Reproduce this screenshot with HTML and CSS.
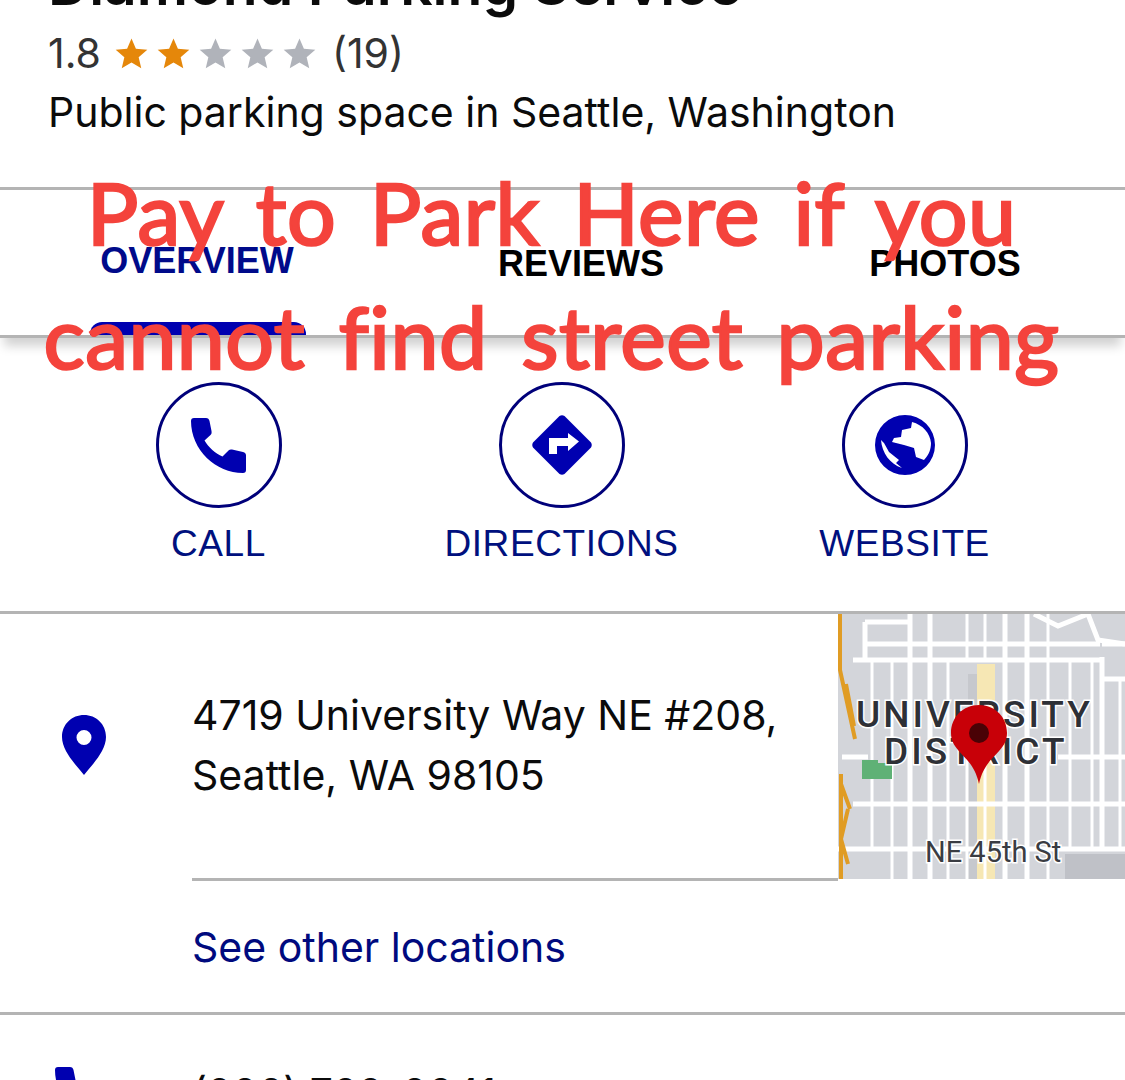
FILE: index.html
```html
<!DOCTYPE html>
<html lang="en">
<head>
  <meta charset="UTF-8" />
  <meta name="viewport" content="width=device-width, initial-scale=1.0"/>
  <title>Diamond Parking Service</title>
  <link rel="stylesheet" href="styles.css">
</head>
<body>
  <div class="page">

    <header class="place">
      <h1 class="place-name">Diamond Parking Service</h1>
      <div class="rating">
        <span>1.8</span>
        <span class="stars">
          <svg class="star star-on" viewBox="0 0 24 24"><path d="M12 1l3.200 7.600 8.300.7-6.300 5.400 1.900 8.100L12 18.500l-7.100 4.300 1.900-8.100L.5 9.300l8.300-.7z"/></svg>
          <svg class="star star-on" viewBox="0 0 24 24"><path d="M12 1l3.200 7.600 8.300.7-6.300 5.400 1.900 8.100L12 18.500l-7.100 4.300 1.900-8.100L.5 9.300l8.300-.7z"/></svg>
          <svg class="star" viewBox="0 0 24 24"><path d="M12 1l3.200 7.600 8.300.7-6.300 5.400 1.900 8.100L12 18.500l-7.100 4.300 1.900-8.100L.5 9.300l8.300-.7z"/></svg>
          <svg class="star" viewBox="0 0 24 24"><path d="M12 1l3.200 7.600 8.300.7-6.300 5.400 1.900 8.100L12 18.500l-7.100 4.300 1.900-8.100L.5 9.300l8.300-.7z"/></svg>
          <svg class="star" viewBox="0 0 24 24"><path d="M12 1l3.200 7.600 8.300.7-6.300 5.400 1.900 8.100L12 18.500l-7.100 4.300 1.900-8.100L.5 9.300l8.300-.7z"/></svg>
        </span>
        <span>(19)</span>
      </div>
      <p class="category">Public parking space in Seattle, Washington</p>
    </header>

    <nav class="tabs">
      <a class="tab tab-active">OVERVIEW</a>
      <a class="tab">REVIEWS</a>
      <a class="tab">PHOTOS</a>
    </nav>

    <section class="actions">
      <a class="action">
        <span class="action-circle">
          <svg class="call-icon" viewBox="0 0 55 55"><path d="M3 0h12c2 0 3 1 3.500 3l2 10c.3 2 0 3-1 4l-6 5.500c4 7 11 13 18 16l6-6c1-1 2-1.300 3.500-1l11 2.500c2 .5 3 1.500 3 3.500V52c0 2-1 3-3 3C25 55 0 32 0 3 0 1 1 0 3 0z"/></svg>
        </span>
        <span class="action-label">CALL</span>
      </a>
      <a class="action">
        <span class="action-circle">
          <svg class="action-icon" viewBox="0 0 60 60"><path fill-rule="evenodd" d="M27.500 1q2.500-1.500 5 0l26.500 26.500q1.500 2.500 0 5L32.500 59q-2.500 1.500-5 0L1 32.500q-1.500-2.500 0-5zM36 18v5H17v16h8v-8h11v5l11-9.500z"/></svg>
        </span>
        <span class="action-label">DIRECTIONS</span>
      </a>
      <a class="action">
        <span class="action-circle">
          <svg class="action-icon" viewBox="0 0 60 60"><path fill-rule="evenodd" d="M30 0a30 30 0 1 0 0 60 30 30 0 0 0 0-60zM6 25c1 13 9 24 21 28l-6-5 3-3-10-8-5-9zM37 7l-1 6-9 2-1 7-7 1-2 4 12 3 10 3 2 9 8 3c5-5 7-11 7-17C55 18 48 10 37 7z"/></svg>
        </span>
        <span class="action-label">WEBSITE</span>
      </a>
    </section>

    <section class="info-row">
      <div class="info-icon">
        <svg class="pin-icon" viewBox="0 0 44 60"><path fill-rule="evenodd" d="M22 0C10 0 0 9 0 22c0 14 14 28 22 38 8-10 22-24 22-38C44 9 34 0 22 0zm0 15a7.500 7.500 0 1 1 0 15 7.500 7.500 0 0 1 0-15z"/></svg>
      </div>
      <div class="info-body">
        <div class="address">
          <p class="address-text">4719 University Way NE #208,<br>Seattle, WA 98105</p>
          <svg class="map" viewBox="0 0 287 267">
            <rect width="287" height="267" fill="#d3d5da"/>
            <rect x="130" y="60" width="9" height="207" fill="#c6c8cd"/>
            <rect x="139" y="50" width="18" height="215" fill="#f6e7b4"/>
            <path class="map-road" d="M15 46H262M27 8H70M27 30H262M27 8V46M72 0V267M92 0V267M167 0V267M189 0V267M264 43V235M4 143H30M15 190H287M0 235H287M220 143H287M264 65H287M264 30H287"/>
            <path class="map-road-thin" d="M129 0V46M147 0V46M210 0V46M34 46V235M54 46V265M110 46V265M129 130V265M147 130V265M210 46V265M232 46V235M254 46V235M282 65V235"/>
            <path d="M196 0l24 12 30-12 10 26 27 4" fill="none" stroke="#fff" stroke-width="5"/>
            <path d="M2 0V56L17 125M8 70L16 112M3 160V265M3 170L12 195M10 195L3 225M3 225L10 250" fill="none" stroke="#e09c24" stroke-width="4"/>
            <path d="M24 146h16v3h14v16H24z" fill="#5fb176"/>
            <rect x="227" y="240" width="60" height="25" fill="#bfc1c7"/>
            <rect y="265" width="287" height="2" fill="#fff"/>
            <text class="map-label" x="18" y="113">UNIVERSITY</text>
            <text class="map-label" x="46" y="150">DISTRICT</text>
            <text class="map-street" x="87" y="248">NE 45th St</text>
            <path d="M141 91c-16 0-28 12-28 28 0 20 22 22 28 51 6-29 28-31 28-51 0-16-12-28-28-28z" fill="#c80008"/>
            <circle cx="141" cy="119" r="10" fill="#4a0206"/>
          </svg>
        </div>
        <a class="other-link">See other locations</a>
      </div>
    </section>

    <section class="phone-row">
      <div class="info-icon">
        <svg class="phone-icon" viewBox="0 0 55 55"><path d="M3 0h12c2 0 3 1 3.500 3l2 10c.3 2 0 3-1 4l-6 5.500c4 7 11 13 18 16l6-6c1-1 2-1.300 3.500-1l11 2.500c2 .5 3 1.500 3 3.500V52c0 2-1 3-3 3C25 55 0 32 0 3 0 1 1 0 3 0z"/></svg>
      </div>
      <p class="phone-text">(206) 722-0041</p>
    </section>

    <div class="caption">
      <div>Pay to Park Here if you</div>
      <div>cannot find street parking</div>
    </div>
  </div>
</body>
</html>
```

FILE: styles.css
```css
* {
  box-sizing: border-box;
}

html, body {
  margin: 0;
  padding: 0;
  background-color: white;
}

body {
  font-family: Inter, "Liberation Sans", sans-serif;
  color: #0b0b0b;
}

p {
  margin: 0;
}

.page {
  position: relative;
  width: 1125px;
  height: 1080px;
  overflow: hidden;
}

/* header */
.place {
  display: flow-root;
  height: 187px;
  padding-left: 48px;
}

.place-name {
  margin: -40px 0 0;
  height: 50px;
  font-size: 57px;
  line-height: 50px;
  font-weight: 600;
  white-space: nowrap;
}

.rating {
  display: flex;
  align-items: center;
  margin-top: 21px;
  height: 44px;
  font-size: 41px;
  color: #333;
}

.stars {
  display: flex;
  gap: 9px;
  margin: 0 16px 0 14px;
}

.star {
  width: 33px;
  height: 33px;
  fill: #b0b3ba;
}

.star-on {
  fill: #e5870a;
}

.category {
  margin-top: 14px;
  font-size: 41px;
  line-height: 46px;
  white-space: nowrap;
}

/* tabs */
.tabs {
  display: grid;
  grid-template-columns: 394px 374px 354px;
  height: 151px;
  border-top: 3px solid #b4b4b4;
  border-bottom: 3px solid #b4b4b4;
  box-shadow: 0 12px 10px -4px rgba(0,0,0,0.18);
}

.tab {
  padding-top: 54px;
  text-align: center;
  font-family: "Liberation Sans", sans-serif;
  font-size: 36px;
  line-height: 40px;
  font-weight: bold;
  color: #000;
}

.tab-active {
  position: relative;
  padding-top: 51px;
  color: #000a8a;
}

.tab-active::after {
  content: '';
  position: absolute;
  left: 90px;
  bottom: 0;
  width: 216px;
  height: 13px;
  background-color: #0000b0;
  border-radius: 12px 12px 0 0;
}

/* call / directions / website */
.actions {
  display: grid;
  grid-template-columns: repeat(3, 343px);
  height: 276px;
  padding: 44px 0 0 47px;
  border-bottom: 3px solid #b4b4b4;
}

.action {
  display: flex;
  flex-direction: column;
  align-items: center;
}

.action-circle {
  display: flex;
  align-items: center;
  justify-content: center;
  width: 126px;
  height: 126px;
  border: 3px solid #00007a;
  border-radius: 50%;
}

.action-icon {
  width: 60px;
  height: 60px;
  fill: #0000b0;
}

.call-icon {
  width: 55px;
  height: 55px;
  fill: #0000b0;
}

.action-label {
  margin-top: 15px;
  font-family: "Liberation Sans", sans-serif;
  font-size: 37px;
  line-height: 42px;
  letter-spacing: 0.6px;
  color: #00107e;
}

/* address + phone */
.info-row, .phone-row {
  display: flex;
}

.info-row {
  height: 401px;
  border-bottom: 3px solid #b4b4b4;
}

.info-icon {
  flex: 0 0 192px;
  padding-left: 62px;
}

.pin-icon {
  display: block;
  width: 44px;
  height: 60px;
  margin-top: 101px;
  fill: #0000b0;
}

.info-body {
  flex: 1;
  min-width: 0;
}

.address {
  display: flex;
  justify-content: space-between;
  height: 267px;
  border-bottom: 3px solid #b4b4b4;
}

.address-text {
  padding-top: 71px;
  font-size: 41px;
  line-height: 60px;
  white-space: nowrap;
}

.map {
  display: block;
  width: 287px;
  height: 267px;
}

.map-road {
  fill: none;
  stroke: #fff;
  stroke-width: 5;
}

.map-road-thin {
  fill: none;
  stroke: #fff;
  stroke-width: 3;
}

.map-label {
  font-family: Roboto, "Liberation Sans", sans-serif;
  font-size: 37px;
  font-weight: 500;
  letter-spacing: 3px;
  fill: #2e3036;
  stroke: #fff;
  stroke-width: 3px;
  paint-order: stroke;
}

.map-street {
  font-family: Roboto, "Liberation Sans", sans-serif;
  font-size: 29px;
  fill: #3a3c42;
  stroke: #fff;
  stroke-width: 3px;
  paint-order: stroke;
}

.other-link {
  display: block;
  padding-top: 41px;
  font-size: 41px;
  line-height: 50px;
  color: #000a7e;
}

.phone-row .info-icon {
  padding-left: 55px;
}

.phone-icon {
  display: block;
  width: 55px;
  height: 55px;
  margin-top: 52px;
  fill: #0000b0;
}

.phone-text {
  padding-top: 53px;
  font-size: 41px;
  line-height: 50px;
}

/* red caption stuck over the screenshot */
.caption {
  position: absolute;
  top: 150px;
  left: 0;
  width: 100%;
  padding-right: 22px;
  text-align: center;
  font-family: Lato, sans-serif;
  font-size: 86px;
  line-height: 124px;
  letter-spacing: 0.5px;
  word-spacing: 11px;
  color: #f4433c;
  -webkit-text-stroke: 2.5px #f4433c;
  white-space: nowrap;
}
```
